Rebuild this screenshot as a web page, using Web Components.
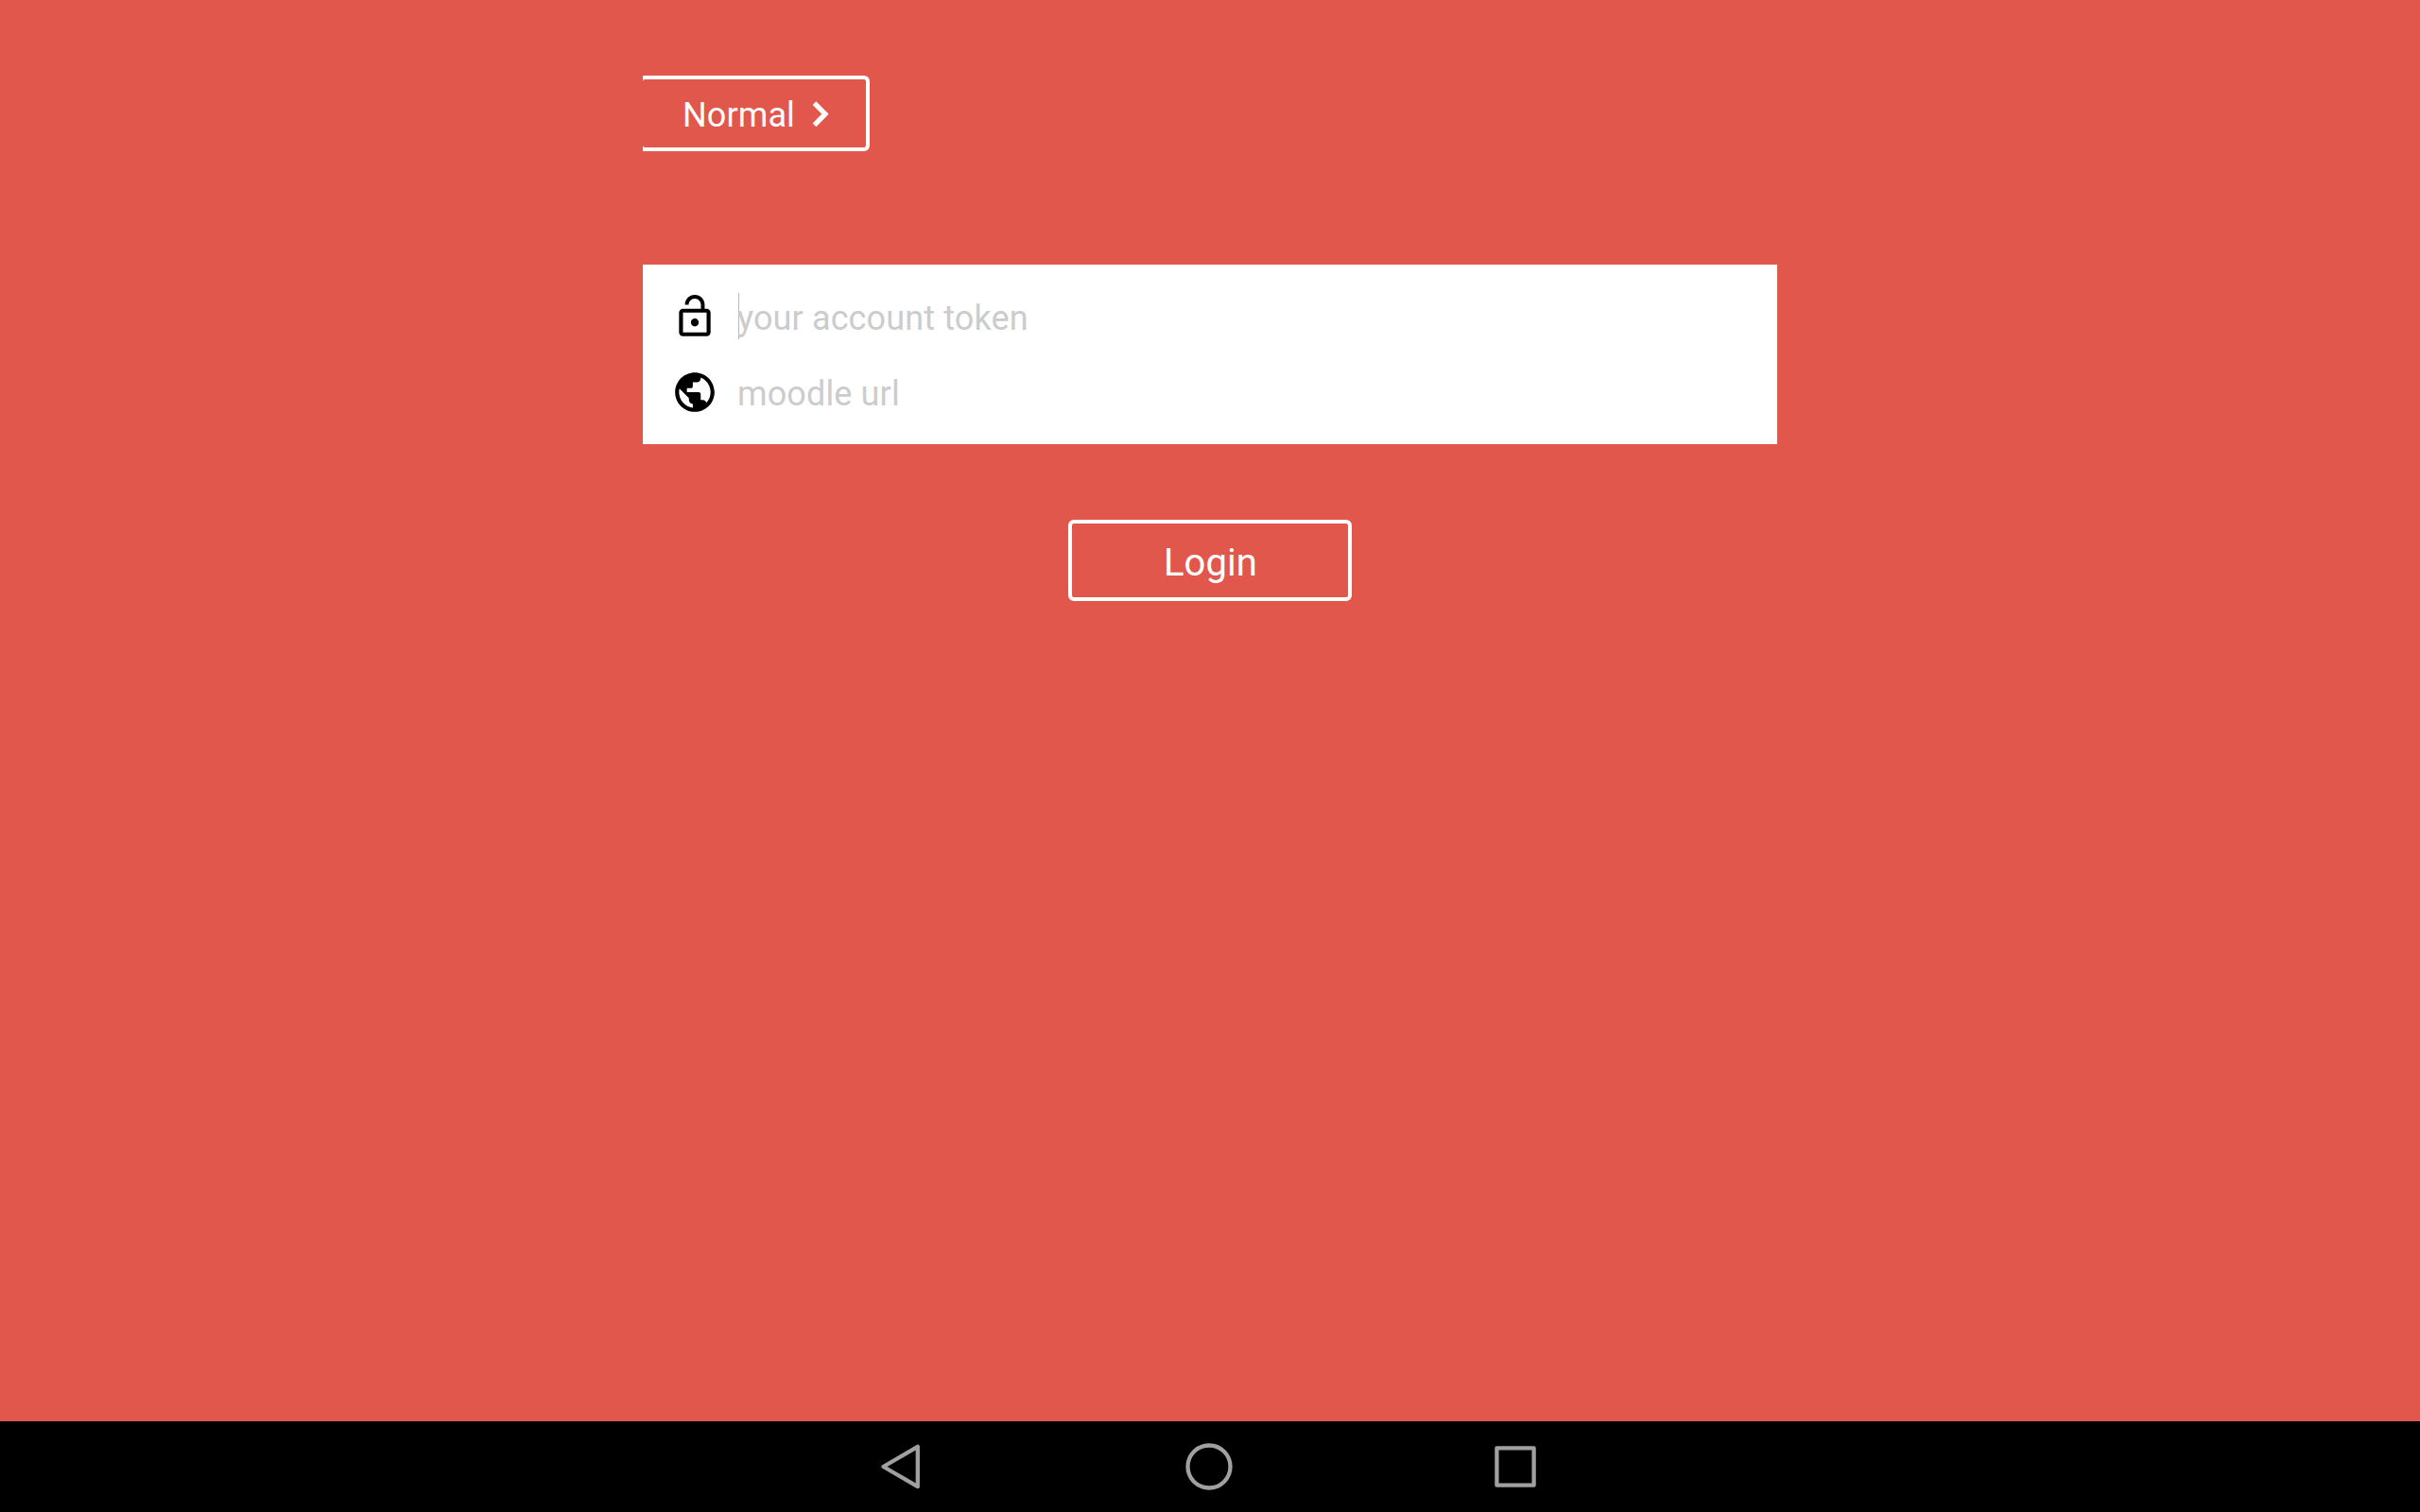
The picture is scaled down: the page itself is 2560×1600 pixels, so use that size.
<!DOCTYPE html>
<html lang="en">
<head>
<meta charset="utf-8">
<title>Login</title>
<style>
html, body { margin: 0; height: 100%; }
body { font-family: Roboto, "Liberation Sans", sans-serif; overflow: hidden; }
</style>
</head>
<body>
<login-screen></login-screen>
<script>
const component = (name, html) => customElements.define(name, class extends HTMLElement {
  constructor() {
    super();
    const t = document.createElement('template');
    t.innerHTML = html;
    this.attachShadow({ mode: 'open' }).append(t.content.cloneNode(true));
  }
});

component('mode-button', `
<style>
:host { display: block; width: 240px; height: 80px; overflow: hidden; color: #fff; }
button { all: unset; box-sizing: border-box; display: flex; align-items: center; justify-content: space-between; width: 244px; height: 80px;
  margin-left: -4px; padding: 2px 38px 0 42px; border: 4px solid #fff; border-radius: 6px; font-size: 36px; line-height: 42px; letter-spacing: .1px; white-space: nowrap; }
span { padding-top: 2px; }
svg { width: 20px; height: 30px; fill: none; stroke: currentColor; stroke-width: 5.2; flex: none; }
</style>
<button><span><slot></slot></span><svg viewBox="0 0 20 30"><path d="M3.5 3.1L15 14.7 3.5 26.3"/></svg></button>`);

component('input-row', `
<style>
:host { display: flex; align-items: flex-start; height: 50px; color: #ccc; font-size: 36px; line-height: 42px; letter-spacing: .13px; }
.icon { display: flex; width: 50px; height: 50px; color: #000; margin-right: 20px; }
.caret { display: none; width: 1px; height: 49px; background: #b8b8b8; margin: 0 -2px 0 1px; }
:host([focused]) .caret { display: block; }
.text { padding-top: 6px; white-space: nowrap; }
</style>
<div class="icon"><slot name="icon"></slot></div><i class="caret"></i><span class="text"><slot></slot></span>`);

component('login-card', `
<style>
:host { box-sizing: border-box; display: flex; flex-direction: column; gap: 30px; width: 1200px; height: 190px; padding: 30px; background: #fff; }
</style>
<slot></slot>`);

component('login-button', `
<style>
:host { display: block; }
button { all: unset; box-sizing: border-box; display: flex; align-items: center; justify-content: center; width: 300px; height: 86px; padding: 6px 0 0 1px;
  border: 4px solid #fff; border-radius: 6px; color: #fff; font-size: 40px; line-height: 46px; letter-spacing: .1px; }
</style>
<button><slot></slot></button>`);

component('nav-bar', `
<style>
:host { display: flex; justify-content: center; height: 96px; background: #000; }
div { display: flex; align-items: center; justify-content: center; width: 324px; }
svg { width: 64px; height: 64px; fill: none; stroke: #a0a0a0; stroke-width: 4.3; stroke-linejoin: round; }
</style>
<div><svg viewBox="0 0 64 64"><path d="M10.5 32L46.8 10.8V53.2z"/></svg></div>
<div><svg viewBox="0 0 64 64"><circle cx="31" cy="32" r="22.5"/></svg></div>
<div><svg viewBox="0 0 64 64"><rect x="11.4" y="12.3" width="39.2" height="39.4"/></svg></div>`);

component('login-screen', `
<style>
:host { display: flex; flex-direction: column; width: 100%; height: 100vh; background: #e2574c; }
main { flex: 1; box-sizing: border-box; display: flex; flex-direction: column; align-items: center; width: 1200px; margin: 0 auto; padding-top: 80px; }
mode-button { align-self: flex-start; margin-bottom: 120px; }
login-card { margin-bottom: 80px; }
svg { width: 50px; height: 50px; }
</style>
<main>
<mode-button>Normal</mode-button>
<login-card>
<input-row focused><svg slot="icon" viewBox="0 0 24 24"><path d="M12 17c1.1 0 2-.9 2-2s-.9-2-2-2-2 .9-2 2 .9 2 2 2zm6-9h-1V6c0-2.76-2.24-5-5-5S7 3.24 7 6h1.9c0-1.71 1.39-3.1 3.1-3.1 1.71 0 3.1 1.39 3.1 3.1v2H6c-1.1 0-2 .9-2 2v10c0 1.1.9 2 2 2h12c1.1 0 2-.9 2-2V10c0-1.1-.9-2-2-2zm0 12H6V10h12v10z"/></svg>your account token</input-row>
<input-row><svg slot="icon" viewBox="0 0 24 24"><path d="M12 2C6.48 2 2 6.48 2 12s4.48 10 10 10 10-4.48 10-10S17.52 2 12 2zm-1 17.93c-3.95-.49-7-3.85-7-7.93 0-.62.08-1.21.21-1.79L9 15v1c0 1.1.9 2 2 2v1.93zm6.9-2.54c-.26-.81-1-1.39-1.9-1.39h-1v-3c0-.55-.45-1-1-1H8v-2h2c.55 0 1-.45 1-1V7h2c1.1 0 2-.9 2-2v-.41c2.93 1.19 5 4.06 5 7.41 0 2.08-.8 3.97-2.1 5.39z"/></svg>moodle url</input-row>
</login-card>
<login-button>Login</login-button>
</main>
<nav-bar></nav-bar>`);
</script>
</body>
</html>
